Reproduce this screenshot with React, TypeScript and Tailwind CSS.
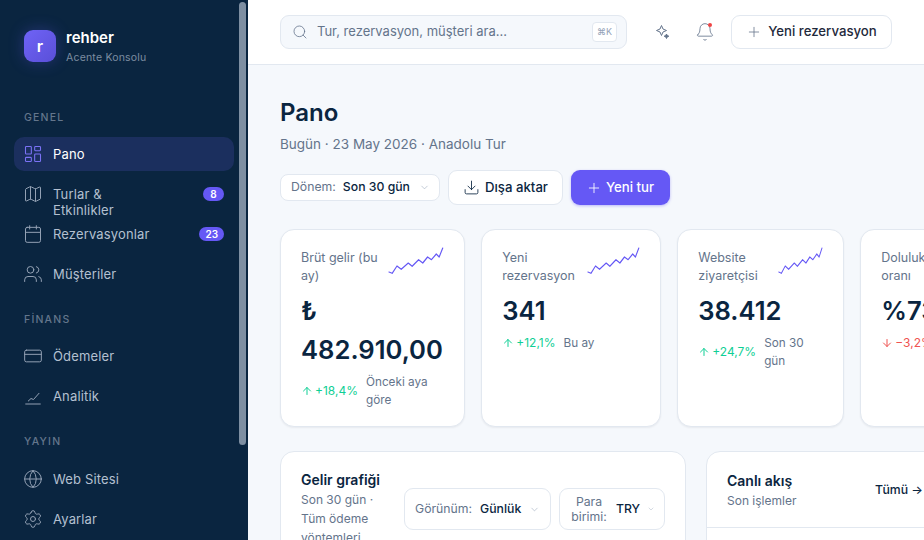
import { ArrowDown, ArrowUp, Bell, Calendar, ChevronDown, CreditCard, Download, Globe, LayoutDashboard, Map, Plus, Search, Settings, Users } from "lucide-react";
import type { ReactNode } from "react";

const spark = "1,25 4.3,26.3 9.3,19 13.7,22.3 21,16 25,19.3 31.7,12.7 36,16 41,10 45,12.7 50,7 53,10 56.7,1";

function Sparkline({ width }: { width: number }) {
  return (
    <svg width={width} height="28" viewBox="0 0 58 28" preserveAspectRatio="none" fill="none" className="shrink-0">
      <polyline points={spark} stroke="#6558f5" strokeWidth="1.2" strokeLinejoin="round" strokeLinecap="round" />
    </svg>
  );
}

function NavItem({ icon, label, badge, active }: { icon: ReactNode; label: string; badge?: string; active?: boolean }) {
  return (
    <div className={`flex h-[34px] items-center rounded-[10px] pl-[9px] pr-[10px] ${active ? "bg-[#1b2f5e] text-white" : "text-[#b4c0d0]"}`}>
      <span className={`flex w-[30px] shrink-0 ${active ? "text-[#7b72f5]" : "text-[#93a1b4]"}`}>{icon}</span>
      <span className="h-4 max-w-[110px] text-[13px] leading-4 tracking-[0.15px]">{label}</span>
      {badge && <span className="ml-auto min-w-[21px] rounded-full bg-[#6558f5] px-[6px] text-center text-[10px] font-semibold leading-[14px] text-white">{badge}</span>}
    </div>
  );
}

function SectionLabel({ children, className }: { children: string; className: string }) {
  return (
    <div className={`px-[10px] text-[10.5px] font-medium leading-[14px] tracking-[1.2px] text-[#64768c] ${className}`}>{children}</div>
  );
}

function AnalyticsIcon() {
  return (
    <svg width="20" height="20" viewBox="0 0 20 20" fill="none" stroke="currentColor" strokeWidth="1" strokeLinecap="round" strokeLinejoin="round">
      <path d="M2.700 18h14.600" />
      <path d="M5.300 15 8 12.500l2.500 1L16 7.300" />
    </svg>
  );
}

function StatCard({ title, value, delta, note, down, width, sparkWidth }: { title: string; value: ReactNode; delta: string; note: string; down?: boolean; width: string; sparkWidth: number }) {
  return (
    <div className={`${width} h-[198px] shrink-0 rounded-[14px] border border-[#e2e8f0] bg-white px-5 pt-[17px] shadow-[0_1px_2px_rgba(15,23,42,0.06)]`}>
      <div className="flex items-start justify-between gap-1">
        <div className="mt-[2px] text-[12.5px] leading-[18px] text-[#64748b]">{title}</div>
        <Sparkline width={sparkWidth} />
      </div>
      <div className="mt-[6px] text-[25.6px] font-semibold leading-[39px] text-[#0a2540]">{value}</div>
      <div className="mt-[4px] flex items-center gap-2">
        <span className={`flex shrink-0 items-center gap-[2px] text-[12px] ${down ? "text-[#ef5350]" : "text-[#0fcf95]"}`}>
          {down ? <ArrowDown size={12} /> : <ArrowUp size={12} />}
          {delta}
        </span>
        <span className="text-[11.750px] leading-[18px] text-[#64748b]">{note}</span>
      </div>
    </div>
  );
}

export default function App() {
  return (
    <div className="flex h-[540px] w-[924px] overflow-hidden bg-[#f5f8fc] font-['Inter',sans-serif]">
      <aside className="relative h-full w-[248px] shrink-0 overflow-hidden bg-[#0a2540] px-[14px] pt-[30px]">
        <div className="absolute right-[2px] top-[2px] h-[443px] w-[7px] rounded-full bg-[#7e8fa2]" />
        <div className="flex items-start gap-[10px] px-[10px]">
          <div className="flex h-8 w-8 items-center justify-center rounded-[9px] bg-gradient-to-br from-[#6f63f6] to-[#5a4fd8] text-[16px] font-semibold text-white shadow-[0_0_16px_rgba(101,88,245,0.3)]">r</div>
          <div className="-mt-[2px]">
            <div className="text-[15px] font-semibold leading-[20px] text-white">rehber</div>
            <div className="mt-[2px] text-[10.5px] leading-[16px] tracking-[0.2px] text-[#7d8da1]">Acente Konsolu</div>
          </div>
        </div>
        <nav className="mt-[45px]">
          <SectionLabel className="mb-[12px]">GENEL</SectionLabel>
          <div className="flex flex-col gap-[6px]">
            <NavItem active label="Pano" icon={<LayoutDashboard size={20} strokeWidth={1.3} />} />
            <NavItem label="Turlar & Etkinlikler" badge="8" icon={<Map size={20} strokeWidth={1.2} />} />
            <NavItem label="Rezervasyonlar" badge="23" icon={<Calendar size={20} strokeWidth={1.2} />} />
            <NavItem label="Müşteriler" icon={<Users size={20} strokeWidth={1.2} />} />
          </div>
          <SectionLabel className="mb-[12px] mt-[22px]">FİNANS</SectionLabel>
          <div className="flex flex-col gap-[6px]">
            <NavItem label="Ödemeler" icon={<CreditCard size={20} strokeWidth={1.2} />} />
            <NavItem label="Analitik" icon={<AnalyticsIcon />} />
          </div>
          <SectionLabel className="mb-[13px] mt-[22px]">YAYIN</SectionLabel>
          <div className="flex flex-col gap-[6px]">
            <NavItem label="Web Sitesi" icon={<Globe size={20} strokeWidth={1.2} />} />
            <NavItem label="Ayarlar" icon={<Settings size={20} strokeWidth={1.2} />} />
          </div>
        </nav>
      </aside>

      <div className="min-w-0 flex-1 overflow-hidden">
        <header className="flex h-[65px] items-center border-b border-[#e2e8f0] bg-white px-8">
          <div className="flex h-[34px] w-[347px] items-center rounded-[9px] border border-[#e2e8f0] bg-[#f5f8fc] pl-[11px] pr-[9px]">
            <Search size={16} strokeWidth={1.2} className="text-[#64748b]" />
            <span className="ml-[9px] flex-1 text-[13px] text-[#64748b]">Tur, rezervasyon, müşteri ara...</span>
            <span className="flex h-5 w-[25px] items-center justify-center rounded-[4px] border border-[#e2e8f0] bg-white text-[9px] text-[#94a3b8]">⌘K</span>
          </div>
          <div className="ml-auto flex items-center gap-[9px]">
            <span className="flex h-[34px] w-[34px] items-center justify-center text-[#64748b]">
              <svg width="15" height="15" viewBox="0 0 15 15" fill="none" stroke="currentColor" strokeWidth="1" strokeLinejoin="round">
                <path d="M6.500 .5 8 4 11.500 5.500 8 7 6.500 10.500 5 7 1.500 5.500 5 4Z" />
                <path d="M11.500 9 12.200 10.500 13.800 11.200 12.200 11.900 11.500 13.500 10.800 11.900 9.200 11.200 10.800 10.500Z" fill="currentColor" />
              </svg>
            </span>
            <span className="relative flex h-[34px] w-[34px] items-center justify-center text-[#64748b]">
              <Bell size={20} strokeWidth={1} />
              <span className="absolute right-[10px] top-[8px] h-[4px] w-[4px] rounded-full bg-[#ef4444]" />
            </span>
            <button className="flex h-[34px] w-[161px] items-center justify-center gap-[6px] rounded-[9px] border border-[#e2e8f0] bg-white text-[13.200px] font-medium text-[#1e293b]">
              <Plus size={16} strokeWidth={1.2} className="text-[#64748b]" />
              Yeni rezervasyon
            </button>
          </div>
        </header>

        <main className="px-8 pt-[32px]">
          <h1 className="text-[24px] font-semibold leading-[32px] text-[#0a2540]">Pano</h1>
          <p className="mt-[5px] text-[13.500px] leading-[20px] text-[#64748b]">Bugün · 23 May 2026 · Anadolu Tur</p>
          <div className="mt-[16px] flex items-center gap-2">
            <div className="flex h-[27px] w-[160px] items-center rounded-[8px] border border-[#e2e8f0] bg-white pl-[10px] pr-[9px] text-[12.250px]">
              <span className="text-[#64748b]">Dönem:</span>
              <span className="ml-[7px] font-medium text-[#0a2540]">Son 30 gün</span>
              <ChevronDown size={11} strokeWidth={1.2} className="ml-auto text-[#94a3b8]" />
            </div>
            <button className="flex h-[35px] w-[115px] items-center justify-center gap-[5px] rounded-[9px] border border-[#e2e8f0] bg-white text-[13.200px] font-medium text-[#0a2540]">
              <Download size={17} strokeWidth={1.2} />
              Dışa aktar
            </button>
            <button className="flex h-[35px] w-[99px] items-center justify-center gap-[4px] rounded-[9px] bg-[#6558f5] pr-[1px] text-[13.200px] font-medium text-white shadow-[0_1px_3px_rgba(101,88,245,0.4)]">
              <Plus size={16} strokeWidth={1.3} />
              Yeni tur
            </button>
          </div>

          <div className="mt-[24px] flex gap-4">
            <StatCard width="w-[185.250px]" sparkWidth={56} title="Brüt gelir (bu ay)" value={<>₺ 482.910,00</>} delta="+18,4%" note="Önceki aya göre" />
            <StatCard width="w-[180px]" sparkWidth={53} title="Yeni rezervasyon" value="341" delta="+12,1%" note="Bu ay" />
            <StatCard width="w-[167px]" sparkWidth={45} title="Website ziyaretçisi" value="38.412" delta="+24,7%" note="Son 30 gün" />
            <StatCard width="w-[180px]" sparkWidth={70} title="Doluluk oranı" value="%73" delta="−3,2%" note="Bu ay" down />
          </div>

          <div className="mt-[24px] flex gap-5">
            <section className="flex h-[200px] w-[406px] shrink-0 items-start rounded-[14px] border border-[#e2e8f0] bg-white px-5 pt-[18px]">
              <div className="w-[100px] shrink-0">
                <h2 className="text-[14px] font-semibold leading-[20px] text-[#0a2540]">Gelir grafiği</h2>
                <p className="text-[12px] leading-[19px] text-[#64748b]">Son 30 gün · Tüm ödeme yöntemleri</p>
              </div>
              <div className="ml-auto mt-[18px] flex gap-2">
                <div className="flex h-[42px] w-[147px] items-center rounded-[9px] border border-[#e2e8f0] bg-white px-[10px] text-[12.250px]">
                  <span className="text-[#64748b]">Görünüm:</span>
                  <span className="ml-[8px] font-medium text-[#0a2540]">Günlük</span>
                  <ChevronDown size={11} strokeWidth={1.2} className="ml-auto text-[#94a3b8]" />
                </div>
                <div className="flex h-[42px] w-[106px] items-center rounded-[9px] border border-[#e2e8f0] bg-white pl-[11px] pr-[9px] text-[12.250px]">
                  <span className="w-[36px] text-center leading-[15px] text-[#64748b]">Para birimi:</span>
                  <span className="ml-[9px] font-medium text-[#0a2540]">TRY</span>
                  <ChevronDown size={8} strokeWidth={1.2} className="ml-auto text-[#94a3b8]" />
                </div>
              </div>
            </section>
            <section className="h-[200px] w-[237px] shrink-0 rounded-[14px] border border-[#e2e8f0] bg-white">
              <div className="flex h-[76px] items-center justify-between border-b border-[#e2e8f0] pl-5 pr-[19px]">
                <div className="mt-[1px]">
                  <h2 className="text-[14px] font-semibold leading-[20px] text-[#0a2540]">Canlı akış</h2>
                  <p className="text-[12px] leading-[19px] text-[#64748b]">Son işlemler</p>
                </div>
                <span className="mt-[1px] text-[12.250px] font-medium text-[#0a2540]">Tümü →</span>
              </div>
            </section>
          </div>
        </main>
      </div>
    </div>
  );
}
